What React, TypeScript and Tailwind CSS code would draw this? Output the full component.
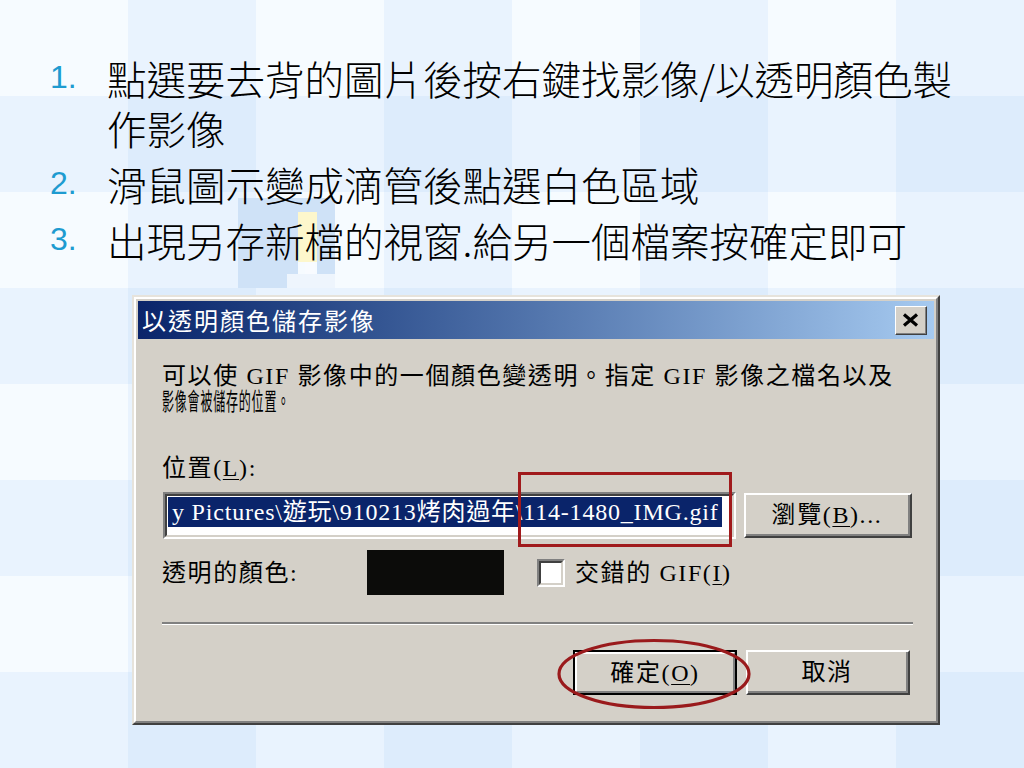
import React from "react";

const cellClasses = [
  "bg-[#f6fbff]",
  "bg-[#e9f3fe]",
  "bg-[#ddecfc]",
];

function Background() {
  const cells: React.ReactNode[] = [];
  for (let r = 0; r < 8; r++) {
    for (let c = 0; c < 8; c++) {
      const n = (r % 2) + (c % 2);
      cells.push(<div key={`${r}-${c}`} className={cellClasses[n]} />);
    }
  }
  return (
    <div className="absolute inset-0 grid grid-cols-8 grid-rows-8">{cells}</div>
  );
}

function Decor() {
  return (
    <>
      <div className="absolute left-[238px] top-[198px] w-[50px] h-[90px] bg-[#cfe2f7]" />
      <div className="absolute left-[288px] top-[198px] w-[47px] h-[14px] bg-[#cfe2f7]" />
      <div className="absolute left-[317px] top-[212px] w-[18px] h-[62px] bg-[#cfe2f7]" />
      <div className="absolute left-[298px] top-[212px] w-[19px] h-[50px] bg-[#fdf7cc]" />
      <div className="absolute left-[288px] top-[212px] w-[10px] h-[62px] bg-[#cfe2f7]" />
      <div className="absolute left-[305px] top-[262px] w-[10px] h-[26px] bg-[#f8fbff]" />
      <div className="absolute left-[287px] top-[274px] w-[48px] h-[14px] bg-[#eef5fd]" />
    </>
  );
}

function U({ children }: { children: React.ReactNode }) {
  return <span className="underline underline-offset-[3px] decoration-1">{children}</span>;
}

function Dialog() {
  return (
    <div className="relative mt-[30px] ml-[132px] w-[808px] h-[430px] border-2 border-t-[#e6e3dc] border-l-[#e6e3dc] border-r-[#404040] border-b-[#404040] font-['Liberation_Serif','Noto_Sans_CJK_TC',serif] text-black">
      <div className="h-full border-2 border-t-white border-l-white border-r-[#808080] border-b-[#808080] bg-[#d4d0c8] p-[2px] flex flex-col">
        {/* Title bar */}
        <div className="h-[38px] shrink-0 flex items-center justify-between pl-[4px] pr-[7px] bg-linear-to-r from-[#0a246a] to-[#a6caf0]">
          <span className="text-white text-[24px] leading-[38px] tracking-[2px] font-['Noto_Sans_CJK_TC',sans-serif]">
            以透明顏色儲存影像
          </span>
          <div className="w-[32px] h-[29px] bg-[#d4d0c8] border-t border-l border-t-white border-l-white border-r border-b border-r-[#404040] border-b-[#404040]">
            <div className="w-full h-full flex items-center justify-center border-r border-b border-r-[#808080] border-b-[#808080]">
              <svg width="17" height="14" viewBox="0 0 17 14">
                <path d="M2 1.5 L15 12.5 M15 1.5 L2 12.5" stroke="#000" strokeWidth="3.2" fill="none" />
              </svg>
            </div>
          </div>
        </div>

        {/* Body */}
        <div className="flex-1 flex flex-col pl-[24px] text-[24px] tracking-[1.6px]">
          <div className="mt-[24px] h-[26px] leading-[26px] whitespace-nowrap">
            可以使 GIF 影像中的一個顏色變透明。指定 GIF 影像之檔名以及
          </div>
          <div className="h-[26px] leading-[26px] whitespace-nowrap">
            <span className="inline-block origin-left scale-x-[0.5]">影像會被儲存的位置。</span>
          </div>

          <div className="mt-[40px] h-[26px] leading-[26px] whitespace-nowrap">
            位置(<U>L</U>):
          </div>

          <div className="mt-[11px] h-[47px] flex items-start gap-[8px]">
            <div className="ml-[1px] w-[573px] h-[47px] border-2 border-t-[#808080] border-l-[#808080] border-r-white border-b-white">
              <div className="h-full border-2 border-t-[#404040] border-l-[#404040] border-r-[#d4d0c8] border-b-[#d4d0c8] bg-white pl-[1px] pt-[1px]">
                <div className="w-[554px] h-[30px] bg-[#0a246a] text-white text-[24px] leading-[30px] tracking-[0.8px] pl-[4px] overflow-hidden whitespace-nowrap">
                  y Pictures\遊玩\910213烤肉過年\114-1480_IMG.gif
                </div>
              </div>
            </div>
            <div className="mt-[1px] w-[168px] h-[45px] border-2 border-t-white border-l-white border-r-[#404040] border-b-[#404040]">
              <div className="h-full flex items-center justify-center border-r-2 border-b-2 border-r-[#808080] border-b-[#808080] whitespace-nowrap">
                瀏覽(<U>B</U>)...
              </div>
            </div>
          </div>

          <div className="mt-[11px] h-[45px] flex items-center">
            <div className="w-[205px] whitespace-nowrap">透明的顏色:</div>
            <div className="w-[137px] h-[45px] bg-[#0c0c0a]" />
            <div className="ml-[33px] w-[28px] h-[28px] border-2 border-t-[#808080] border-l-[#808080] border-r-white border-b-white">
              <div className="h-full border-2 border-t-[#404040] border-l-[#404040] border-r-[#d4d0c8] border-b-[#d4d0c8] bg-white" />
            </div>
            <div className="ml-[10px] whitespace-nowrap">
              交錯的 GIF(<U>I</U>)
            </div>
          </div>

          <div className="mt-[27px] w-[751px] h-[3px] border-t-2 border-t-[#808080] border-b border-b-white" />

          <div className="mt-[25px] flex gap-[9px] ml-[411px]">
            <div className="w-[164px] h-[45px] border-2 border-black">
              <div className="h-full flex items-center justify-center border-t-2 border-l-2 border-t-white border-l-white border-r-2 border-b-2 border-r-[#808080] border-b-[#808080] whitespace-nowrap">
                確定(<U>O</U>)
              </div>
            </div>
            <div className="w-[164px] h-[45px] border-2 border-t-white border-l-white border-r-[#404040] border-b-[#404040]">
              <div className="h-full flex items-center justify-center border-r-2 border-b-2 border-r-[#808080] border-b-[#808080] whitespace-nowrap">
                取消
              </div>
            </div>
          </div>
        </div>
      </div>

      {/* Annotations */}
      <div className="absolute left-[384px] top-[175px] w-[214px] h-[75px] border-[3px] border-[#a01a1c]" />
      <svg className="absolute left-[422px] top-[341px]" width="196" height="72" viewBox="0 0 196 72">
        <ellipse cx="98" cy="36" rx="95" ry="33.5" fill="none" stroke="#9a1a1c" strokeWidth="3.2" />
      </svg>
    </div>
  );
}

const items: string[][] = [
  ["點選要去背的圖片後按右鍵找影像/以透明顏色製", "作影像"],
  ["滑鼠圖示變成滴管後點選白色區域"],
  ["出現另存新檔的視窗.給另一個檔案按確定即可"],
];

export default function App() {
  return (
    <div className="relative w-[1024px] h-[768px] overflow-hidden">
      <Background />
      <Decor />
      <div className="relative">
        <ol className="pt-[53px] pl-[50px] flex flex-col gap-[6px]">
          {items.map((lines, i) => (
            <li key={i} className="flex items-start">
              <span className="mt-[8px] w-[57px] shrink-0 text-[32px] leading-[32px] text-[#1e9bd0] font-['Liberation_Sans',Arial,sans-serif]">
                {i + 1}.
              </span>
              <div className="text-[39.5px] leading-[50px] font-light text-black font-['Noto_Sans_CJK_TC',sans-serif] whitespace-nowrap">
                {lines.map((l, j) => (
                  <div key={j} className="h-[50px]">{l}</div>
                ))}
              </div>
            </li>
          ))}
        </ol>
        <Dialog />
      </div>
    </div>
  );
}
